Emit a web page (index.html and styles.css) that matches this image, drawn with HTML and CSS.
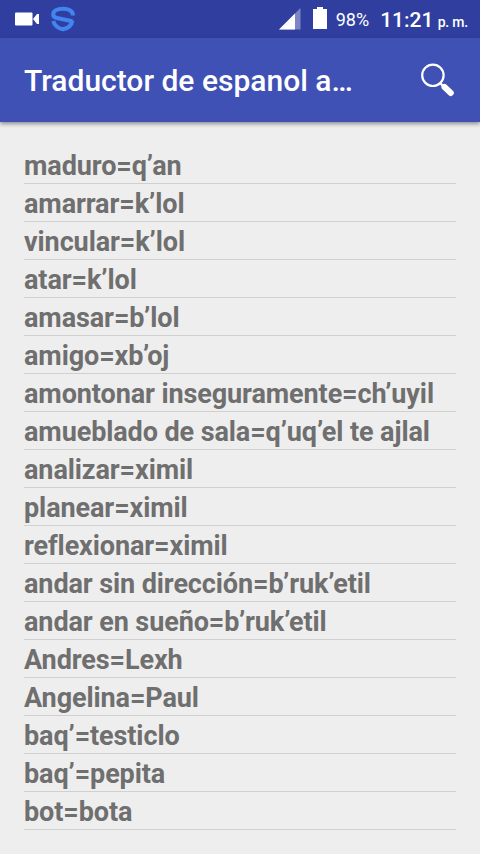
FILE: index.html
```
<!DOCTYPE html>
<html lang="es">
<head>
    <meta charset="UTF-8">
    <meta name="viewport" content="width=device-width, initial-scale=1.0">
    <title>Traductor de espanol</title>
    <link rel="stylesheet" href="styles.css">
</head>
<body>
    <div class="status-bar">
        <svg class="camera" width="25" height="14" viewBox="0 0 25 14">
            <rect x="0" y="0.5" width="17.5" height="13" rx="1" fill="#fff"/>
            <path d="M18 7 L22 2 H24 V12 H22 Z" fill="#fff"/>
        </svg>
        <svg class="shield" width="26" height="26" viewBox="0 0 26 26">
            <path d="M23 9.500 C23 5 19 2.800 13 2.800 C7 2.800 3.200 5 3.200 8.500 C3.200 11 5.500 11.800 8 12.300 L22.500 15.200" fill="none" stroke="#4285f0" stroke-width="4"/>
            <path d="M3.200 15 C4.500 19.500 8 22.300 13 23.200 C18 22.300 21.500 19.500 22.500 14.500" fill="none" stroke="#4285f0" stroke-width="4"/>
        </svg>
        <svg class="signal" width="22" height="22" viewBox="0 0 22 22">
            <path d="M0 21.500 L21.500 0 V21.500 Z" fill="#7d86c4"/>
            <path d="M0 21.500 L16 5.500 V21.500 Z" fill="#fff"/>
        </svg>
        <svg class="battery" width="14" height="22" viewBox="0 0 14 22">
            <path d="M4 0 H10 V2 H14 V22 H0 V2 H4 Z" fill="#fff"/>
        </svg>
        <span class="percent">98%</span>
        <span class="clock">11:21 <small>p. m.</small></span>
    </div>

    <header>
        <h1>Traductor de espanol a…</h1>
        <svg class="search" width="36" height="36" viewBox="0 0 36 36">
            <circle cx="12.900" cy="13.300" r="10.700" fill="none" stroke="#fff" stroke-width="2.200"/>
            <path d="M19.600 20.500 L24 25" stroke="#fff" stroke-width="2.500"/>
            <path d="M24.500 25 L30.800 31" stroke="#fff" stroke-width="6" stroke-linecap="round"/>
        </svg>
    </header>

    <main>
        <ul class="words">
            <li>maduro=q’an</li>
            <li>amarrar=k’lol</li>
            <li>vincular=k’lol</li>
            <li>atar=k’lol</li>
            <li>amasar=b’lol</li>
            <li>amigo=xb’oj</li>
            <li>amontonar inseguramente=ch’uyil</li>
            <li>amueblado de sala=q’uq’el te ajlal</li>
            <li>analizar=ximil</li>
            <li>planear=ximil</li>
            <li>reflexionar=ximil</li>
            <li>andar sin dirección=b’ruk’etil</li>
            <li>andar en sueño=b’ruk’etil</li>
            <li>Andres=Lexh</li>
            <li>Angelina=Paul</li>
            <li>baq’=testiclo</li>
            <li>baq’=pepita</li>
            <li>bot=bota</li>
        </ul>
    </main>
</body>
</html>
```
FILE: styles.css
```
body {
    font-family: Roboto, sans-serif;
    margin: 0;
    padding: 0;
    height: 854px;
    overflow: hidden;
    background-color: #eeeeee;
}

.status-bar {
    display: flex;
    align-items: center;
    box-sizing: border-box;
    height: 38px;
    padding: 0 12px 0 15px;
    background-color: #303f9f;
    color: #fff;
    white-space: nowrap;
}

.shield {
    margin-left: 10px;
}

.signal {
    margin-left: auto;
    margin-right: 12px;
}

.battery {
    margin-right: 9px;
    margin-bottom: 2px;
}

.percent {
    font-size: 18px;
    margin-right: 11px;
}

.clock {
    font-size: 21px;
    font-weight: 500;
    margin-top: 2px;
}

.clock small {
    font-size: 14px;
    margin-left: -1px;
    letter-spacing: -0.2px;
}

header {
    display: flex;
    align-items: center;
    justify-content: space-between;
    box-sizing: border-box;
    position: relative;
    height: 84px;
    padding: 0 24px;
    background-color: #3f51b5;
    box-shadow: 0 2px 4px rgba(0, 0, 0, 0.4);
}

h1 {
    margin: 0;
    color: #fff;
    font-size: 30px;
    font-weight: 500;
}

main {
    padding: 24px;
}

.words {
    list-style-type: none;
    margin: 0;
    padding: 0;
}

.words li {
    box-sizing: border-box;
    height: 38px;
    padding-top: 2px;
    border-bottom: 1px solid #d0d0d0;
    color: #6f6f6f;
    font-size: 27px;
    font-weight: 700;
    letter-spacing: -0.1px;
    line-height: 36px;
    white-space: nowrap;
}
```
